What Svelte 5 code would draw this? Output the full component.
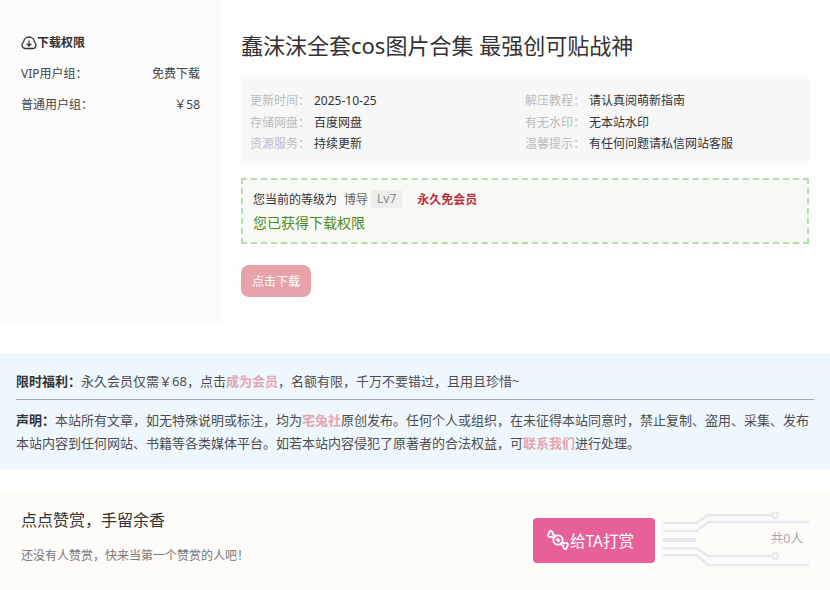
<script>
    const infoLeft = [
        ["更新时间：", "2025-10-25"],
        ["存储网盘：", "百度网盘"],
        ["资源服务：", "持续更新"],
    ];
    const infoRight = [
        ["解压教程：", "请认真阅萌新指南"],
        ["有无水印：", "无本站水印"],
        ["温馨提示：", "有任何问题请私信网站客服"],
    ];
</script>

<style>
    :global(body) {
        margin: 0;
        background: #fff;
    }

    main {
        width: 830px;
        height: 590px;
        overflow: hidden;
        font-family: "Noto Sans", "Noto Sans CJK SC", sans-serif;
        font-size: 12px;
        color: #444;
    }

    .pay {
        height: 325px;
        display: flex;
        background: #fdfdfd;
    }

    .side {
        width: 220px;
        box-sizing: border-box;
        padding: 35px 20px 0 21px;
        background: #fbfbfb;
    }

    .side h3 {
        margin: 0 0 14px;
        display: flex;
        align-items: center;
        font-size: 12px;
        line-height: 16px;
        font-weight: 700;
        color: #333;
    }

    .side .row {
        display: flex;
        justify-content: space-between;
        line-height: 17px;
        margin-bottom: 14px;
    }

    .content {
        flex: 1;
        padding: 30px 21px 0;
    }

    h1 {
        margin: 0 0 17px;
        font-size: 22px;
        line-height: 30px;
        font-weight: 400;
        color: #333;
    }

    .meta {
        display: grid;
        grid-template-columns: 1fr 1fr;
        height: 84px;
        box-sizing: border-box;
        padding: 13px 9px 0;
        background: #f7f7f8;
    }

    .meta .item {
        display: flex;
        line-height: 21.5px;
    }

    .meta .key {
        width: 64px;
        color: #bbb;
    }

    .meta .val {
        color: #333;
    }

    .notice {
        margin-top: 17px;
        height: 66px;
        box-sizing: border-box;
        padding: 9px 10px 0;
        border: 2px dashed #b7dcae;
        background: #f7f9f4;
    }

    .level {
        display: flex;
        align-items: center;
        height: 20px;
        color: #333;
    }

    .level .name {
        margin-left: 7px;
        color: #666;
    }

    .level .lv {
        margin-left: 3px;
        padding: 0 6px;
        background: #eeeeee;
        color: #888;
        line-height: 18px;
    }

    .level .vip {
        margin-left: 15px;
        color: #b93240;
        font-weight: 700;
    }

    .ok {
        margin-top: 4px;
        font-size: 14px;
        line-height: 20px;
        color: #4f8a1c;
    }

    .down {
        display: block;
        margin-top: 21px;
        width: 70px;
        height: 32px;
        padding: 0;
        border: 0;
        border-radius: 8px;
        background: #e6a3aa;
        color: #fff;
        font: inherit;
    }

    .info {
        margin-top: 29px;
        height: 115px;
        box-sizing: border-box;
        padding: 16px 16px 0;
        background: #eff7fe;
        font-size: 13px;
        line-height: 23px;
        color: #4d4d4d;
    }

    .info p {
        margin: 0;
        white-space: nowrap;
    }

    .info b {
        color: #333;
    }

    .info a {
        color: #e4a5b0;
        font-weight: 700;
    }

    .info hr {
        margin: 6px 0 9px;
        border: 0;
        border-top: 1px solid #a4a7ab;
    }

    .reward {
        margin-top: 21px;
        height: 100px;
        display: flex;
        align-items: flex-start;
        background: #fdfcf8;
    }

    .reward .text {
        flex: 1;
        padding: 19px 21px 0;
    }

    .reward h4 {
        margin: 0 0 15px;
        font-size: 16px;
        line-height: 22px;
        font-weight: 400;
        color: #333;
    }

    .reward p {
        margin: 0;
        line-height: 20px;
        color: #777;
    }

    .give {
        margin-top: 28px;
        margin-right: 8px;
        width: 122px;
        height: 45px;
        display: flex;
        align-items: center;
        gap: 1px;
        padding: 0 0 1px 14px;
        border: 0;
        border-radius: 4px;
        background: #e8609a;
        color: #fff;
        font: inherit;
        font-size: 15.5px;
    }

    .lines {
        margin-top: 22px;
        margin-right: 20px;
        position: relative;
    }

    .lines svg {
        display: block;
    }

    .lines span {
        position: absolute;
        right: 7px;
        top: 18px;
        font-size: 12.5px;
        line-height: 18px;
        color: #aaa;
    }
</style>

<main>
    <section class="pay">
        <aside class="side">
            <h3>
                <svg width="16" height="16" viewBox="0 0 16 16" fill="none" stroke="#333" stroke-width="1.3">
                    <path d="M4.6 13.5 C2.6 13.5 1 12 1 9.9 C1 8.6 1.6 7.6 2.6 7 C2.8 4.2 5.2 2 8 2 C10.8 2 13.2 4.2 13.4 7 C14.4 7.6 15 8.6 15 9.9 C15 12 13.4 13.5 11.4 13.5 Z" />
                    <path d="M8 5.5 V10.8 M5.6 8.6 L8 11 L10.4 8.6" />
                </svg>
                下载权限
            </h3>
            <div class="row"><span>VIP用户组：</span><span>免费下载</span></div>
            <div class="row"><span>普通用户组：</span><span>￥58</span></div>
        </aside>
        <div class="content">
            <h1>蠢沫沫全套cos图片合集 最强创可贴战神</h1>
            <div class="meta">
                <div>
                    {#each infoLeft as [k, v]}
                        <div class="item"><span class="key">{k}</span><span class="val">{v}</span></div>
                    {/each}
                </div>
                <div>
                    {#each infoRight as [k, v]}
                        <div class="item"><span class="key">{k}</span><span class="val">{v}</span></div>
                    {/each}
                </div>
            </div>
            <div class="notice">
                <div class="level">
                    <span>您当前的等级为</span>
                    <span class="name">博导</span>
                    <span class="lv">Lv7</span>
                    <span class="vip">永久免会员</span>
                </div>
                <div class="ok">您已获得下载权限</div>
            </div>
            <button class="down">点击下载</button>
        </div>
    </section>

    <section class="info">
        <p><b>限时福利：</b>永久会员仅需￥68，点击<a>成为会员</a>，名额有限，千万不要错过，且用且珍惜~</p>
        <hr />
        <p><b>声明：</b>本站所有文章，如无特殊说明或标注，均为<a>宅兔社</a>原创发布。任何个人或组织，在未征得本站同意时，禁止复制、盗用、采集、发布</p>
        <p>本站内容到任何网站、书籍等各类媒体平台。如若本站内容侵犯了原著者的合法权益，可<a>联系我们</a>进行处理。</p>
    </section>

    <section class="reward">
        <div class="text">
            <h4>点点赞赏，手留余香</h4>
            <p>还没有人赞赏，快来当第一个赞赏的人吧！</p>
        </div>
        <button class="give">
            <svg width="22" height="22" viewBox="0 0 21 21" fill="none" stroke="#fff" stroke-width="1.8" stroke-linejoin="round">
                <circle cx="10.5" cy="10.5" r="4.4" />
                <path d="M8.6 9.6 L11.4 12.4 M9.6 8.6 L12.4 11.4" stroke-width="1.2" />
                <path d="M7.4 7.4 C7.6 5.8 6.6 5.2 5.6 5.2 C5.8 3.2 4.2 1.4 2.6 2.2 C1.6 2.8 2.4 4 1.8 4.6 C0.6 5.4 0.8 7.6 2.4 7.6 C3.4 7.6 4.4 7 5 7.8 C5.4 8.4 6.8 8.2 7.4 7.4 Z" />
                <path d="M13.6 13.6 C13.4 15.2 14.4 15.8 15.4 15.8 C15.2 17.8 16.8 19.6 18.4 18.8 C19.4 18.2 18.6 17 19.2 16.4 C20.4 15.6 20.2 13.4 18.6 13.4 C17.6 13.4 16.6 14 16 13.2 C15.6 12.6 14.2 12.8 13.6 13.6 Z" />
            </svg>
            给TA打赏
        </button>
        <div class="lines">
            <svg width="147" height="56" viewBox="0 0 147 56" fill="none" stroke="#e6e8ef" stroke-width="2.5">
                <path d="M0 10.7 H33.5 L45 3.3 H110" />
                <path d="M0 19 H33.5 L45 10 H146" />
                <path d="M0 28 H33" stroke-width="4" />
                <path d="M0 36.3 H33.5 L45 44 H110" />
                <path d="M0 43.3 H33.5 L45 53 H146" />
                <circle cx="112" cy="3.3" r="3" fill="#fdfcf8" stroke-width="2" />
                <circle cx="112" cy="44" r="3" fill="#fdfcf8" stroke-width="2" />
            </svg>
            <span>共0人</span>
        </div>
    </section>
</main>
